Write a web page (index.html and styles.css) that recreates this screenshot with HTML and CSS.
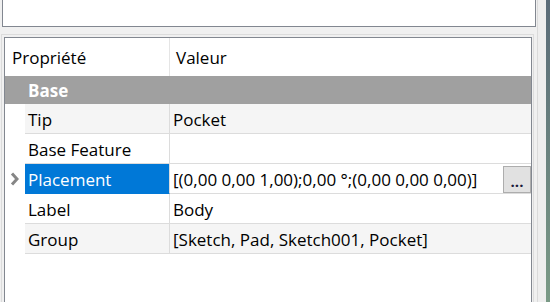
FILE: index.html
```html
<!DOCTYPE html>
<html lang="fr">
<head>
  <meta charset="UTF-8">
  <title>Propriétés</title>
  <link rel="stylesheet" href="styles.css">
</head>
<body>
  <div class="panel">
    <div class="view-box"></div>

    <div class="prop-frame">
      <div class="prop-table">
        <div class="prop-head">
          <div class="head-cell name">Propriété</div>
          <div class="head-cell">Valeur</div>
        </div>

        <div class="prop-group">Base</div>

        <div class="prop-row alt">
          <div class="branch"></div>
          <div class="cell name">Tip</div>
          <div class="cell">Pocket</div>
        </div>
        <div class="prop-row">
          <div class="branch"></div>
          <div class="cell name">Base Feature</div>
          <div class="cell"></div>
        </div>
        <div class="prop-row">
          <div class="branch">
            <svg width="9" height="14" viewBox="0 0 9 14">
              <polyline points="2,1.5 7,7 2,12.5" fill="none" stroke="#868686" stroke-width="3"/>
            </svg>
          </div>
          <div class="cell name selected">Placement</div>
          <div class="cell editor">
            <span>[(0,00 0,00 1,00);0,00 °;(0,00 0,00 0,00)]</span>
            <button class="dots-btn">...</button>
          </div>
        </div>
        <div class="prop-row">
          <div class="branch"></div>
          <div class="cell name">Label</div>
          <div class="cell">Body</div>
        </div>
        <div class="prop-row alt">
          <div class="branch"></div>
          <div class="cell name">Group</div>
          <div class="cell">[Sketch, Pad, Sketch001, Pocket]</div>
        </div>
      </div>
    </div>
  </div>

  <div class="splitter"></div>
  <div class="desktop"></div>
</body>
</html>
```

FILE: styles.css
```css
* {
  margin: 0;
  padding: 0;
  box-sizing: border-box;
}

body {
  height: 302px;
  overflow: hidden;
  display: flex;
  background: #f0f0f0;
  font-family: "Open Sans", "Noto Sans", sans-serif;
  font-size: 17px;
  color: #000;
}

.panel {
  width: 537px;
  display: flex;
  flex-direction: column;
}

.view-box {
  margin-left: 2px;
  width: 534px;
  height: 27px;
  background: #fff;
  border: 1px solid #828790;
  border-top: none;
}

.prop-frame {
  flex: 1;
  margin-top: 7px;
  margin-left: 1px;
  width: 533px;
  border: 1px solid #dcdcdc;
  border-bottom: none;
  padding: 2px 1px 0 2px;
  display: flex;
}

.prop-table {
  flex: 1;
  background: #fff;
  border: 1px solid #828790;
  border-bottom: none;
}

.prop-head {
  display: flex;
  height: 38px;
  align-items: center;
}

.head-cell {
  flex: 1;
  height: 100%;
  display: flex;
  align-items: center;
  padding-left: 6px;
}

.head-cell.name {
  flex: none;
  width: 165px;
  padding-left: 7px;
  border-right: 1px solid #e5e5e5;
}

.prop-group {
  height: 28px;
  background: #a0a0a0;
  color: #fff;
  font-weight: 700;
  padding-left: 23px;
  padding-top: 1px;
  display: flex;
  align-items: center;
}

.prop-row {
  display: flex;
  height: 30px;
}

.branch {
  width: 20px;
  flex: none;
  display: flex;
  align-items: center;
  padding-left: 5px;
  background: #fff;
}

.cell {
  flex: 1;
  display: flex;
  align-items: center;
  padding-left: 3px;
  padding-top: 2px;
  border-bottom: 1px solid #dcdcdc;
  white-space: nowrap;
}

.cell.name {
  flex: none;
  width: 145px;
  border-right: 1px solid #dcdcdc;
}

.prop-row.alt .cell {
  background: #f5f5f5;
}

.cell.selected {
  background: #0078d7;
  color: #fff;
  border-bottom-color: #0078d7;
}

.cell.editor {
  justify-content: space-between;
  padding-top: 2px;
  padding-bottom: 0;
}

.dots-btn {
  width: 28px;
  height: 27px;
  align-self: flex-end;
  background: #e1e1e1;
  border: 1px solid #adadad;
  font-family: inherit;
  font-size: 15px;
  font-weight: 700;
  line-height: 1;
  color: #1a1a3a;
  padding-top: 4px;
}

.splitter {
  width: 9px;
  border-left: 1px solid #dadada;
  background: #eeeeee;
}

.desktop {
  flex: 1;
  background: linear-gradient(180deg, #5a6b78, #7a9a86);
}
```
